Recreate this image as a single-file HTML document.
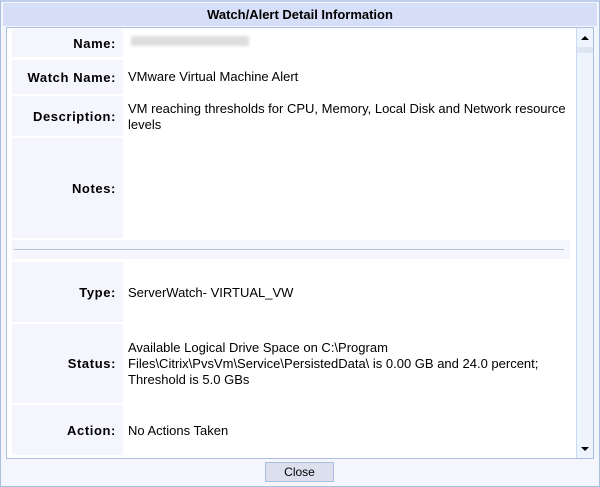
<!DOCTYPE html>
<html><head><style>
*{margin:0;padding:0;box-sizing:border-box}
body{width:600px;height:487px;background:#f5f6fd;font-family:"Liberation Sans",sans-serif;font-size:13px;color:#000;position:relative;overflow:hidden}
.outer{position:absolute;left:0;top:0;width:600px;height:487px;border:1px solid #a9bfe0;border-top:2px solid #c0cfec}
.title{position:absolute;left:3px;top:3px;width:594px;height:23px;background:#d6dff7;text-align:center;font-weight:bold;font-size:13px;line-height:23px}
.box{position:absolute;left:6px;top:27px;width:588px;height:432px;background:#fff;border:1px solid #a9bfe0}
.lab{position:absolute;left:5px;width:111px;background:#f5f6fd;font-weight:bold;font-size:13px;letter-spacing:0.6px;text-align:right;padding-right:7px;display:flex;align-items:center;justify-content:flex-end;white-space:nowrap}
.val{position:absolute;left:121px;width:442px;line-height:16px}
.sb{position:absolute;left:569px;top:0;width:17px;height:430px;background:#eef4fd;border-left:1px solid #c8d8ee}
.btn{position:absolute;left:265px;top:462px;width:69px;height:20px;background:#dcdfee;border:1px solid #a9bfe0;text-align:center;line-height:18px;font-size:12px}
</style></head><body>
<div class="outer"></div>
<div class="title">Watch/Alert Detail Information</div>
<div class="box">
<div class="lab" style="top:1px;height:28px">Name:</div>
<div style="position:absolute;left:124px;top:8px;width:118px;height:10px;background:#ddd;filter:blur(1.5px)"></div>
<div class="lab" style="top:32px;height:34px">Watch Name:</div>
<div class="val" style="top:41px">VMware Virtual Machine Alert</div>
<div class="lab" style="top:68px;height:40px">Description:</div>
<div class="val" style="top:73px">VM reaching thresholds for CPU, Memory, Local Disk and Network resource levels</div>
<div class="lab" style="top:110px;height:100px">Notes:</div>
<div style="position:absolute;left:5px;top:212px;width:558px;height:19px;background:#f5f6fd"></div>
<div style="position:absolute;left:7px;top:221px;width:550px;height:1px;background:#b8c4dc"></div>
<div class="lab" style="top:234px;height:60px">Type:</div>
<div class="val" style="top:257px">ServerWatch- VIRTUAL_VW</div>
<div class="lab" style="top:296px;height:79px">Status:</div>
<div class="val" style="top:312px">Available Logical Drive Space on C:\Program Files\Citrix\PvsVm\Service\PersistedData\ is 0.00 GB and 24.0 percent; Threshold is 5.0 GBs</div>
<div class="lab" style="top:377px;height:50px">Action:</div>
<div class="val" style="top:395px">No Actions Taken</div>
<div class="sb">
<div style="position:absolute;left:4px;top:8px;width:0;height:0;border-left:4px solid transparent;border-right:4px solid transparent;border-bottom:4px solid #000"></div>
<div style="position:absolute;left:0;top:19px;width:16px;height:6px;background:#dde6f3"></div>
<div style="position:absolute;left:4px;top:419px;width:0;height:0;border-left:4px solid transparent;border-right:4px solid transparent;border-top:4px solid #000"></div>
</div>
</div>
<div class="btn">Close</div>
</body></html>
